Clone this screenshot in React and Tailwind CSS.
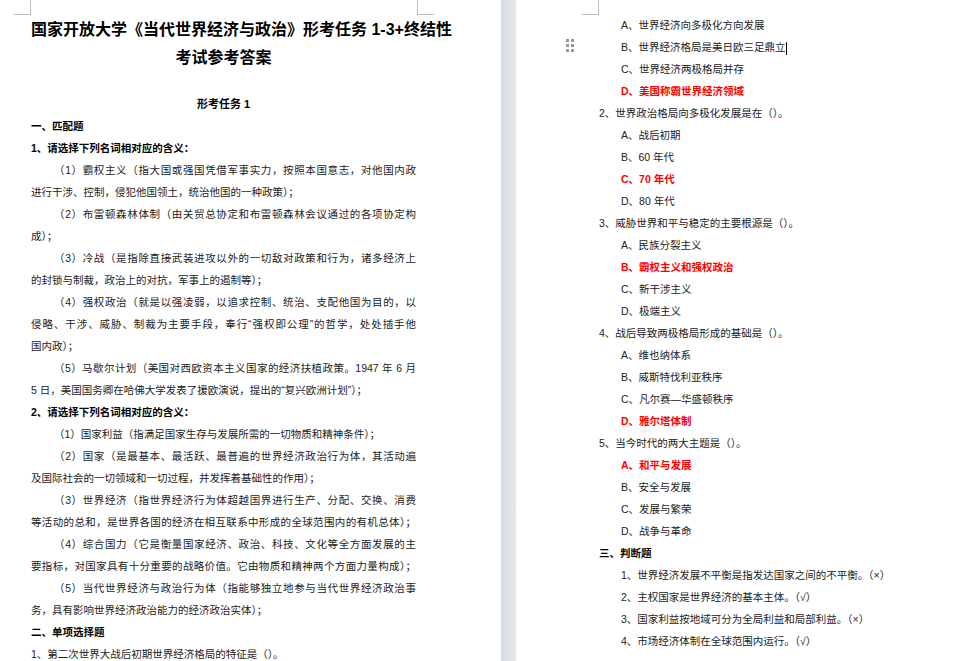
export default function App() {
  const F = { fontFamily: '"Liberation Sans","Noto Sans CJK SC",sans-serif' };
  const J = "whitespace-nowrap [text-align-last:justify]";
  const left = [
    ["h", "一、匹配题"],
    ["h", "1、请选择下列名词相对应的含义："],
    ["i", "（1）霸权主义（指大国或强国凭借军事实力，按照本国意志，对他国内政"],
    ["n", "进行干涉、控制，侵犯他国领土，统治他国的一种政策）；"],
    ["i", "（2）布雷顿森林体制（由关贸总协定和布雷顿森林会议通过的各项协定构"],
    ["n", "成）；"],
    ["i", "（3）冷战（是指除直接武装进攻以外的一切敌对政策和行为，诸多经济上"],
    ["n", "的封锁与制裁，政治上的对抗，军事上的遏制等）；"],
    ["i", "（4）强权政治（就是以强凌弱，以追求控制、统治、支配他国为目的，以"],
    ["n", "侵略、干涉、威胁、制裁为主要手段，奉行“强权即公理”的哲学，处处插手他"],
    ["n", "国内政）；"],
    ["i", "（5）马歇尔计划（美国对西欧资本主义国家的经济扶植政策。1947 年 6 月"],
    ["n", "5 日，美国国务卿在哈佛大学发表了援欧演说，提出的“复兴欧洲计划”）；"],
    ["h", "2、请选择下列名词相对应的含义："],
    ["i", "（1）国家利益（指满足国家生存与发展所需的一切物质和精神条件）；"],
    ["i", "（2）国家（是最基本、最活跃、最普遍的世界经济政治行为体，其活动遍"],
    ["n", "及国际社会的一切领域和一切过程，并发挥着基础性的作用）；"],
    ["i", "（3）世界经济（指世界经济行为体超越国界进行生产、分配、交换、消费"],
    ["n", "等活动的总和，是世界各国的经济在相互联系中形成的全球范围内的有机总体）；"],
    ["i", "（4）综合国力（它是衡量国家经济、政治、科技、文化等全方面发展的主"],
    ["n", "要指标，对国家具有十分重要的战略价值。它由物质和精神两个方面力量构成）；"],
    ["i", "（5）当代世界经济与政治行为体（指能够独立地参与当代世界经济政治事"],
    ["n", "务，具有影响世界经济政治能力的经济政治实体）；"],
    ["h", "二、单项选择题"],
    ["q", "1、第二次世界大战后初期世界经济格局的特征是（）。"],
  ];
  const justified = new Set([2, 4, 6, 8, 9, 11, 15, 17, 18, 19, 20, 21]);
  const right = [
    ["o", "A、世界经济向多极化方向发展"],
    ["o", "B、世界经济格局是美日欧三足鼎立", "cursor"],
    ["o", "C、世界经济两极格局并存"],
    ["r", "D、美国称霸世界经济领域"],
    ["q", "2、世界政治格局向多极化发展是在（）。"],
    ["o", "A、战后初期"],
    ["o", "B、60 年代"],
    ["r", "C、70 年代"],
    ["o", "D、80 年代"],
    ["q", "3、威胁世界和平与稳定的主要根源是（）。"],
    ["o", "A、民族分裂主义"],
    ["r", "B、霸权主义和强权政治"],
    ["o", "C、新干涉主义"],
    ["o", "D、极端主义"],
    ["q", "4、战后导致两极格局形成的基础是（）。"],
    ["o", "A、维也纳体系"],
    ["o", "B、威斯特伐利亚秩序"],
    ["o", "C、凡尔赛—华盛顿秩序"],
    ["r", "D、雅尔塔体制"],
    ["q", "5、当今时代的两大主题是（）。"],
    ["r", "A、和平与发展"],
    ["o", "B、安全与发展"],
    ["o", "C、发展与繁荣"],
    ["o", "D、战争与革命"],
    ["h", "三、判断题"],
    ["o", "1、世界经济发展不平衡是指发达国家之间的不平衡。（×）"],
    ["o", "2、主权国家是世界经济的基本主体。（√）"],
    ["o", "3、国家利益按地域可分为全局利益和局部利益。（×）"],
    ["o", "4、市场经济体制在全球范围内运行。（√）"],
  ];
  return (
    <div className="flex w-[956px] h-[661px] overflow-hidden bg-white text-[#222]" style={F}>
      <div className="relative w-[501px] shrink-0 bg-white">
        <div className="absolute left-[14px] top-0 w-[17px] h-[15px] border-r border-b border-[#bbb]" />
        <div className="absolute left-[417px] top-0 w-[17px] h-[15px] border-l border-b border-[#bbb]" />
        <div className="pl-[31px] w-[416px] pt-[16px]">
          <div className="text-[16px] font-bold leading-[28px] text-black text-center">
            <div className="whitespace-nowrap">国家开放大学《当代世界经济与政治》形考任务 1-3+终结性</div>
            <div>考试参考答案</div>
          </div>
          <div className="mt-[21px] text-center text-[11px] font-bold leading-[22px] text-black">形考任务 1</div>
          {left.map(([t, s], i) => (
            <div
              key={i}
              className={`h-[22px] leading-[22px] text-[10.5px] ${t === "h" ? "font-bold text-black" : ""} ${t === "i" ? "pl-[23px]" : ""} ${justified.has(i) ? J : "whitespace-nowrap"}`}
            >
              {s}
            </div>
          ))}
        </div>
      </div>
      <div className="w-[15px] shrink-0 bg-gradient-to-r from-[#d8dce0] to-[#e6e9ec]" />
      <div className="relative flex-1 bg-white">
        <div className="absolute left-[66px] top-0 w-[17px] h-[15px] border-r border-b border-[#bbb]" />
        <div className="absolute left-[50px] top-[39px] grid grid-cols-2 gap-x-[2px] gap-y-[2px]">
          {[0, 1, 2, 3, 4, 5].map((k) => (
            <div key={k} className="w-[3px] h-[3px] bg-[#999]" />
          ))}
        </div>
        <div className="pl-[83px] pt-[14px]">
          {right.map(([t, s, c], i) => (
            <div
              key={i}
              className={`h-[22px] leading-[22px] text-[10.5px] whitespace-nowrap ${t === "o" || t === "r" ? "pl-[22px]" : ""} ${t === "r" ? "text-[#ff0000] font-bold" : ""} ${t === "h" ? "font-bold text-black" : ""}`}
            >
              {s}
              {c && <span className="inline-block w-[1px] h-[13px] bg-black align-middle" />}
            </div>
          ))}
        </div>
      </div>
    </div>
  );
}
